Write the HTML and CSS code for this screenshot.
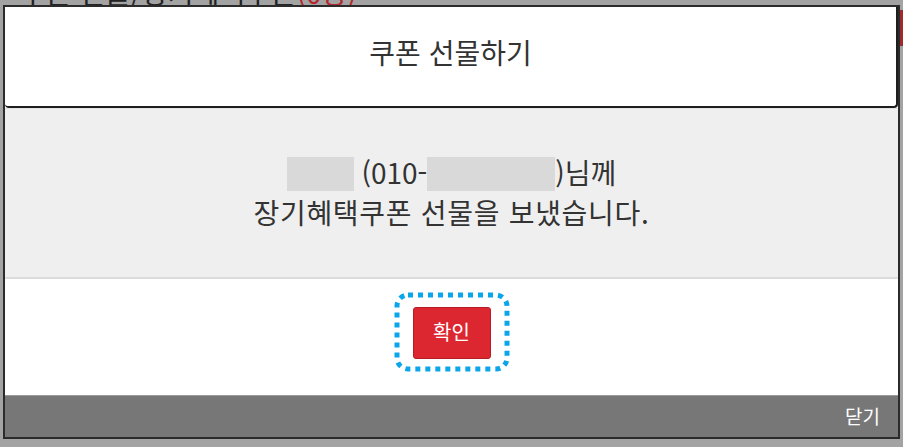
FILE: index.html
```html
<!DOCTYPE html>
<html lang="ko">

<head>
    <meta charset="utf-8">
    <meta name="viewport" content="width=device-width, initial-scale=1.0">
    <title>쿠폰 선물하기</title>
    <link rel="stylesheet" href="styles.css">
</head>

<body>
    <!-- page behind the popup -->
    <div class="bag">
        <p class="bag-titel">쿠폰 선물/장기혜택쿠폰<span>(0장)</span></p>
        <div class="bag-rod"></div>
        <div class="bag-kant"></div>
        <div class="bag-bund">
            <span class="bag-boks"></span>
            <span>(결제일, 결제수단 변경시)</span>
        </div>
    </div>

    <section class="popup">
        <header class="popup-top">
            <h1>쿠폰 선물하기</h1>
        </header>

        <div class="popup-indhold">
            <p>
                <span class="skjult kort"></span> (010-<span class="skjult lang"></span>)님께<br>
                <span class="linje2">장기혜택쿠폰 선물을 보냈습니다.</span>
            </p>
        </div>

        <div class="popup-knap">
            <span class="fokus">
                <svg class="prikker" width="116" height="80" viewBox="0 0 116 80">
                    <rect x="3" y="3" width="110" height="74" rx="11" fill="none" stroke="#0aa6e9" stroke-width="5" stroke-dasharray="5 5"/>
                </svg>
                <button class="ok">확인</button>
            </span>
        </div>

        <footer class="popup-bund">
            <button class="luk">닫기</button>
        </footer>
    </section>
</body>

</html>
```

FILE: styles.css
```css
* {
    box-sizing: border-box;
}

body {
    margin: 0;
    width: 903px;
    height: 447px;
    overflow: hidden;
    background-color: #a3a3a3;
    font-family: 'Noto Sans CJK KR', 'Noto Sans', sans-serif;
    color: #333;
}

.bag {
    position: relative;
    width: 903px;
    height: 447px;
}

.bag-titel {
    margin: 0;
    padding-left: 20px;
    font-size: 28px;
    line-height: 30px;
    margin-top: -23px;
    color: #222;
}

.bag-titel span {
    color: #b3262c;
}

.bag-rod {
    position: absolute;
    left: 16px;
    top: 438px;
    width: 2px;
    height: 9px;
    background-color: #b3262c;
}

.bag-kant {
    position: absolute;
    right: 0;
    top: 33px;
    width: 3px;
    height: 36px;
    background-color: #9e2a2e;
}

.bag-bund {
    position: absolute;
    left: 584px;
    top: 434px;
    display: flex;
    gap: 26px;
    font-size: 19px;
    line-height: 22px;
    color: #333;
}

.bag-boks {
    display: inline-block;
    width: 28px;
    height: 22px;
    border: 2px solid #222;
    border-radius: 6px;
    background-color: #fff;
}

/* popup */

.popup {
    position: absolute;
    left: 3px;
    top: 5px;
    width: 897px;
    height: 434px;
    border: 2px solid #2b2b2b;
    display: flex;
    flex-direction: column;
    background-color: #fff;
}

.popup-top {
    height: 101px;
    border: 2px solid #1e1e1e;
    border-top: 0;
    border-left: 0;
    border-radius: 0 0 4px 4px;
    display: flex;
    justify-content: center;
    align-items: center;
    background-color: #fff;
}

.popup-top h1 {
    margin: 0;
    font-size: 28px;
    font-weight: 400;
    color: #333;
    padding-bottom: 9px;
}

.popup-indhold {
    height: 171px;
    border-top: 1px solid #e2e2e2;
    border-bottom: 2px solid #dcdcdc;
    background-color: #efefef;
    display: flex;
    justify-content: center;
    align-items: center;
    text-align: center;
}

.popup-indhold p {
    margin: 0;
    font-size: 28px;
    line-height: 40px;
    color: #333;
    padding-bottom: 2px;
}

.linje2 {
    letter-spacing: 0.7px;
}

.skjult {
    display: inline-block;
    height: 34px;
    vertical-align: -7px;
    background-color: #d9d9d9;
}

.kort {
    width: 67px;
}

.lang {
    width: 128px;
}

.popup-knap {
    flex: 1;
    display: flex;
    justify-content: center;
    align-items: center;
    padding-bottom: 10px;
}

.fokus {
    position: relative;
    display: flex;
    width: 116px;
    height: 80px;
    padding: 15px 0 0 19px;
}

.prikker {
    position: absolute;
    left: 0;
    top: 0;
}

.ok {
    width: 78px;
    height: 52px;
    border: 1px solid #b51d25;
    border-radius: 3px;
    background-color: #dd2730;
    color: #fff;
    font-family: 'Noto Sans CJK KR', sans-serif;
    font-size: 20px;
    padding: 0 0 3px 0;
    cursor: pointer;
}

.popup-bund {
    height: 42px;
    border-top: 1px solid #9a9a9a;
    background-color: #777;
    display: flex;
    justify-content: flex-end;
    align-items: center;
}

.luk {
    border: none;
    background-color: #777;
    color: #fff;
    font-family: 'Noto Sans CJK KR', sans-serif;
    font-size: 19px;
    padding: 0 18px 2px 0;
    cursor: pointer;
}
```
